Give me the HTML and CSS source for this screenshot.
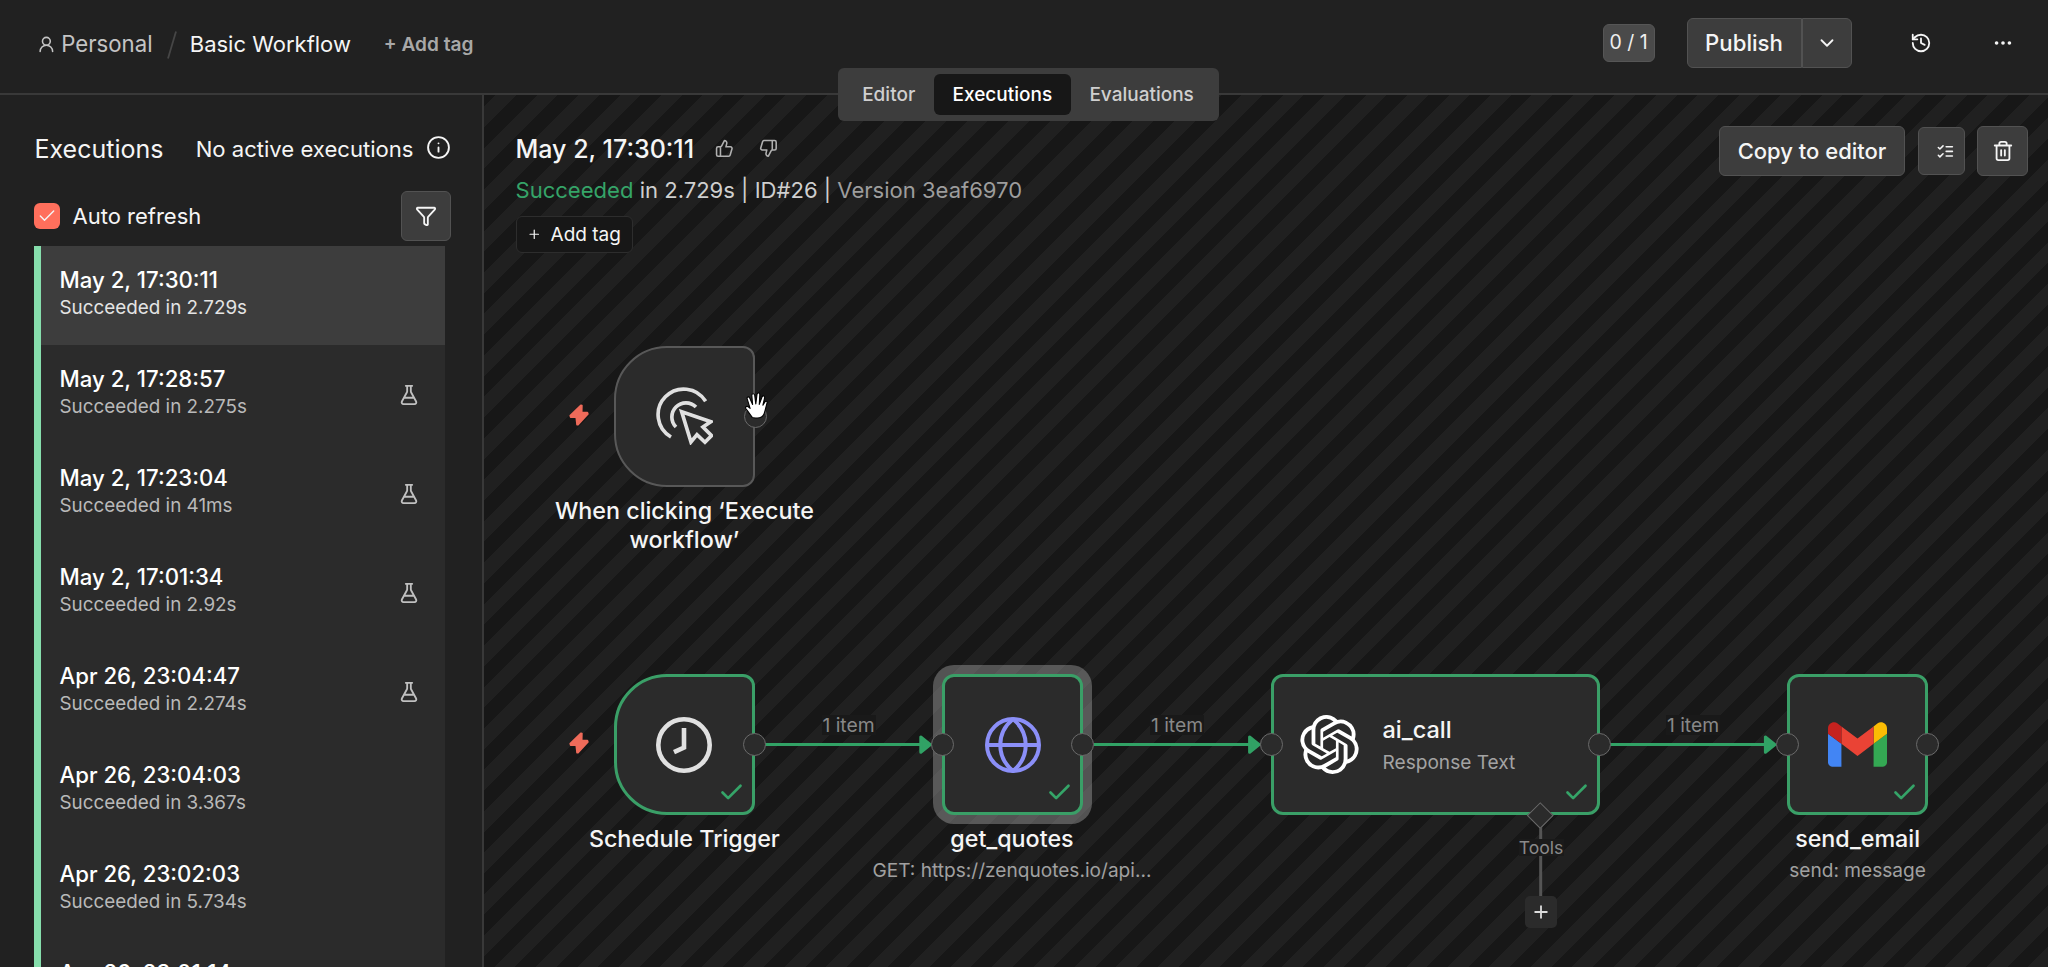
FILE: index.html
```html
<!DOCTYPE html>
<html lang="en">
<head>
<meta charset="utf-8">
<title>Basic Workflow</title>
<link rel="stylesheet" href="styles.css">
</head>
<body>
<svg class="defs" width="0" height="0" aria-hidden="true">
  <symbol id="i-flask" viewBox="0 0 24 24"><path d="M14 2v6a2 2 0 0 0 .245.96l5.51 10.08A2 2 0 0 1 18 22H6a2 2 0 0 1-1.755-2.96l5.51-10.08A2 2 0 0 0 10 8V2M6.453 15h11.094M8.5 2h7"/></symbol>
  <symbol id="i-check" viewBox="0 0 24 24"><path d="M20 6 9 17l-5-5"/></symbol>
  <symbol id="i-bolt" viewBox="0 0 20 22"><path d="M11.8 1.2 1.2 11.6 1.6 13.1H7.2L8 20.6 9 20.7 18.9 9.9 18.4 8.5H12.7L12.9 1.6Z"/></symbol>
</svg>
<div class="app">
  <header class="topbar">
    <nav class="crumbs">
      <svg class="icon user" viewBox="0 0 24 24"><circle cx="12" cy="8" r="5"/><path d="M20 21a8 8 0 0 0-16 0"/></svg>
      <span class="owner">Personal</span>
      <svg class="slash" viewBox="0 0 10 28"><path d="M9 .5 1 27.5"/></svg>
      <span class="name">Basic Workflow</span>
      <span class="addtag">+ Add tag</span>
    </nav>
    <div class="actions">
      <span class="counter">0 / 1</span>
      <div class="split">
        <button class="publish">Publish</button>
        <button class="more"><svg class="icon i22" viewBox="0 0 24 24"><path d="m6 9 6 6 6-6"/></svg></button>
      </div>
      <svg class="icon i22 history" viewBox="0 0 24 24"><path d="M3 12a9 9 0 1 0 9-9 9.75 9.75 0 0 0-6.74 2.74L3 8"/><path d="M3 3v5h5M12 7v5l4 2"/></svg>
      <svg class="icon i22" viewBox="0 0 24 24"><circle cx="12" cy="12" r="1"/><circle cx="19" cy="12" r="1"/><circle cx="5" cy="12" r="1"/></svg>
    </div>
    <div class="tabs">
      <span class="tab">Editor</span>
      <span class="tab active">Executions</span>
      <span class="tab">Evaluations</span>
    </div>
  </header>

  <aside class="sidebar">
    <div class="heading">
      <h1>Executions</h1>
      <span class="none">No active executions</span>
      <svg class="icon info" viewBox="0 0 24 24"><circle cx="12" cy="12" r="10"/><path d="M12 16v-4M12 8h.01"/></svg>
    </div>
    <div class="controls">
      <span class="checkbox"><svg class="icon" viewBox="0 0 24 24"><path d="M20 6 9 17l-5-5"/></svg></span>
      <span class="auto">Auto refresh</span>
      <button class="filter"><svg class="icon i22" viewBox="0 0 24 24"><path d="M10 20a1 1 0 0 0 .553.895l2 1A1 1 0 0 0 14 21v-7a2 2 0 0 1 .517-1.341L21.74 4.67A1 1 0 0 0 21 3H3a1 1 0 0 0-.742 1.67l7.225 7.989A2 2 0 0 1 10 14z"/></svg></button>
    </div>
    <ul class="list">
      <li class="run selected"><div><b>May 2, 17:30:11</b><span>Succeeded in 2.729s</span></div></li>
      <li class="run"><div><b>May 2, 17:28:57</b><span>Succeeded in 2.275s</span></div><svg class="icon i22"><use href="#i-flask"/></svg></li>
      <li class="run"><div><b>May 2, 17:23:04</b><span>Succeeded in 41ms</span></div><svg class="icon i22"><use href="#i-flask"/></svg></li>
      <li class="run"><div><b>May 2, 17:01:34</b><span>Succeeded in 2.92s</span></div><svg class="icon i22"><use href="#i-flask"/></svg></li>
      <li class="run"><div><b>Apr 26, 23:04:47</b><span>Succeeded in 2.274s</span></div><svg class="icon i22"><use href="#i-flask"/></svg></li>
      <li class="run"><div><b>Apr 26, 23:04:03</b><span>Succeeded in 3.367s</span></div></li>
      <li class="run"><div><b>Apr 26, 23:02:03</b><span>Succeeded in 5.734s</span></div></li>
      <li class="run"><div><b>Apr 26, 23:01:14</b></div></li>
    </ul>
  </aside>

  <main class="preview">
    <section class="details">
      <div class="summary">
        <div class="title">
          <h2>May 2, 17:30:11</h2>
          <svg class="icon thumb" viewBox="0 0 24 24"><path d="M7 10v12M15 5.88 14 10h5.83a2 2 0 0 1 1.92 2.56l-2.33 8A2 2 0 0 1 17.5 22H4a2 2 0 0 1-2-2v-8a2 2 0 0 1 2-2h2.76a2 2 0 0 0 1.79-1.11L12 2a3.13 3.13 0 0 1 3 3.88Z"/></svg>
          <svg class="icon thumb" viewBox="0 0 24 24"><path d="M17 14V2M9 18.12 10 14H4.17a2 2 0 0 1-1.92-2.56l2.33-8A2 2 0 0 1 6.5 2H20a2 2 0 0 1 2 2v8a2 2 0 0 1-2 2h-2.76a2 2 0 0 0-1.79 1.11L12 22a3.13 3.13 0 0 1-3-3.88Z"/></svg>
        </div>
        <p class="status"><span class="ok">Succeeded</span> in 2.729s | ID#26 | <span class="version">Version 3eaf6970</span></p>
        <button class="tagbtn"><svg class="icon" viewBox="0 0 24 24"><path d="M5 12h14M12 5v14"/></svg>Add tag</button>
      </div>
      <div class="tools">
        <button class="copy">Copy to editor</button>
        <button class="vote"><svg class="icon" viewBox="0 0 24 24"><path d="m3 17 2 2 4-4M3 7l2 2 4-4M13 6h8M13 12h8M13 18h8"/></svg></button>
        <button class="trash"><svg class="icon i22" viewBox="0 0 24 24"><path d="M3 6h18M19 6v14a2 2 0 0 1-2 2H7a2 2 0 0 1-2-2V6M8 6V4a2 2 0 0 1 2-2h4a2 2 0 0 1 2 2v2M10 11v6M14 11v6"/></svg></button>
      </div>
    </section>

    <div class="canvas">
      <svg class="edges" viewBox="484 95 1564 872">
        <g class="edge"><path d="M765 744.6H922"/><path d="M1094 744.6H1250"/><path d="M1610 744.6H1767"/></g>
        <g class="arrow"><path d="M920.8 737v15.2l9.6-7.6z"/><path d="M1249.6 737v15.2l9.6-7.6z"/><path d="M1765.4 737v15.2l9.6-7.6z"/></g>
        <path class="tool-edge" d="M1540.7 826V897"/>
      </svg>

      <span class="edge-label e1">1 item</span>
      <span class="edge-label e2">1 item</span>
      <span class="edge-label e3">1 item</span>

      <svg class="bolt b1"><use href="#i-bolt"/></svg>
      <div class="node trigger manual">
        <svg class="cursor" viewBox="348 204 172 172"><path d="M497 247A77 77 0 1 0 393 354M468 264A42 42 0 1 0 408 324M425 278 513 308 489 324 515 350 495 370 471 347 453 369Z"/></svg>
        <i class="port out"></i>
      </div>
      <div class="caption c1"><strong>When clicking ‘Execute workflow’</strong></div>
      <svg class="hand" viewBox="0 0 24 27"><path d="M8.3 25.4C6.6 23.2 3.4 18.7 1.8 16.5 .9 15.2 2.6 13.7 4.2 14.8L6.1 16.3 3.2 6.9C2.6 4.8 4.9 4.1 5.7 6L8.6 12.4 7.8 3.4C7.7 1.3 10.3 1.2 10.7 3.2L11.8 12 13 2.4C13.4 .4 15.9 .7 15.8 2.8L15.3 12.4 18 5C18.8 3.1 21 3.9 20.6 5.8L18.9 13.2 20.9 9.9C21.9 8.5 23.6 9.5 23 11.1 21.9 14.6 21.2 19 20 22 18.6 25.5 16 26 13.2 26 11 26 9.3 26.2 8.3 25.4Z"/></svg>

      <svg class="bolt b2"><use href="#i-bolt"/></svg>
      <div class="node trigger success schedule">
        <svg class="clock" viewBox="0 0 56 56"><circle cx="28" cy="28" r="25.7"/><path d="M28 11v19.5L18 35.2"/></svg>
        <i class="port out"></i>
        <svg class="tick"><use href="#i-check"/></svg>
      </div>
      <div class="caption c2"><strong>Schedule Trigger</strong></div>

      <div class="node success http">
        <svg class="globe" viewBox="0 0 56 56"><circle cx="28" cy="28" r="26"/><path d="M2 28h52M28 2C11 16 11 40 28 54C45 40 45 16 28 2"/></svg>
        <i class="port in"></i><i class="port out"></i>
        <svg class="tick"><use href="#i-check"/></svg>
      </div>
      <div class="caption c3"><strong>get_quotes</strong><small>GET: https://zenquotes.io/api...</small></div>

      <div class="node success ai">
        <svg class="openai" viewBox="0 0 24 24"><path d="M22.2819 9.8211a5.9847 5.9847 0 0 0-.5157-4.9108 6.0462 6.0462 0 0 0-6.5098-2.9A6.0651 6.0651 0 0 0 4.9807 4.1818a5.9847 5.9847 0 0 0-3.9977 2.9 6.0462 6.0462 0 0 0 .7427 7.0966 5.98 5.98 0 0 0 .511 4.9107 6.051 6.051 0 0 0 6.5146 2.9001A5.9847 5.9847 0 0 0 13.2599 24a6.0557 6.0557 0 0 0 5.7718-4.2058 5.9894 5.9894 0 0 0 3.9977-2.9001 6.0557 6.0557 0 0 0-.7475-7.073zm-9.022 12.6081a4.4755 4.4755 0 0 1-2.8764-1.0408l.1419-.0804 4.7783-2.7582a.7948.7948 0 0 0 .3927-.6813v-6.7369l2.02 1.1686a.071.071 0 0 1 .038.052v5.5826a4.504 4.504 0 0 1-4.4945 4.4944zm-9.6607-4.1254a4.4708 4.4708 0 0 1-.5346-3.0137l.142.0852 4.783 2.7582a.7712.7712 0 0 0 .7806 0l5.8428-3.3685v2.3324a.0804.0804 0 0 1-.0332.0615L9.74 19.9502a4.4992 4.4992 0 0 1-6.1408-1.6464zM2.3408 7.8956a4.485 4.485 0 0 1 2.3655-1.9728V11.6a.7664.7664 0 0 0 .3879.6765l5.8144 3.3543-2.0201 1.1685a.0757.0757 0 0 1-.071 0l-4.8303-2.7865A4.504 4.504 0 0 1 2.3408 7.872zm16.5963 3.8558L13.1038 8.364 15.1192 7.2a.0757.0757 0 0 1 .071 0l4.8303 2.7913a4.4944 4.4944 0 0 1-.6765 8.1042v-5.6772a.79.79 0 0 0-.407-.667zm2.0107-3.0231l-.142-.0852-4.7735-2.7818a.7759.7759 0 0 0-.7854 0L9.409 9.2297V6.8974a.0662.0662 0 0 1 .0284-.0615l4.8303-2.7866a4.4992 4.4992 0 0 1 6.6802 4.66zM8.3065 12.863l-2.02-1.1638a.0804.0804 0 0 1-.038-.0567V6.0742a4.4992 4.4992 0 0 1 7.3757-3.4537l-.142.0805L8.704 5.459a.7948.7948 0 0 0-.3927.6813zm1.0976-2.3654l2.602-1.4998 2.6069 1.4998v2.9994l-2.5974 1.4997-2.6067-1.4997Z"/></svg>
        <div class="ai-text"><strong>ai_call</strong><small>Response Text</small></div>
        <i class="port in"></i><i class="port out"></i><i class="port diamond"></i>
        <svg class="tick"><use href="#i-check"/></svg>
      </div>
      <span class="tools-label">Tools</span>
      <span class="plus"><svg viewBox="0 0 14 14"><path d="M7 .5v13M.5 7h13"/></svg></span>

      <div class="node success gmail">
        <svg class="gmail-logo" viewBox="52 42 88 66"><path fill="#4285f4" d="M58 108h14V74L52 59v43c0 3.32 2.69 6 6 6"/><path fill="#34a853" d="M120 108h14c3.32 0 6-2.69 6-6V59l-20 15"/><path fill="#fbbc04" d="M120 48v26l20-15v-8c0-7.42-8.47-11.65-14.4-7.2"/><path fill="#ea4335" d="M72 74V48l24 18 24-18v26L96 92"/><path fill="#c5221f" d="M52 51v8l20 15V48l-5.6-4.2c-5.94-4.45-14.4-.22-14.4 7.2"/></svg>
        <i class="port in"></i><i class="port out"></i>
        <svg class="tick"><use href="#i-check"/></svg>
      </div>
      <div class="caption c4"><strong>send_email</strong><small>send: message</small></div>
    </div>
  </main>
</div>
</body>
</html>
```
FILE: styles.css
```css
* { box-sizing: border-box; margin: 0; padding: 0; }

body {
  width: 2048px;
  height: 967px;
  overflow: hidden;
  background: #212121;
  color: #f5f5f5;
  font-family: Inter, "Liberation Sans", sans-serif;
  font-size: 22px;
}

button {
  display: flex;
  align-items: center;
  justify-content: center;
  font: inherit;
  font-weight: 500;
  color: inherit;
  background: #3d3d3d;
  border: 1.5px solid #525252;
  border-radius: 6px;
}

.defs { position: absolute; }

.icon {
  flex: none;
  display: block;
  width: 18.75px;
  height: 18.75px;
  fill: none;
  stroke: currentColor;
  stroke-width: 2;
  stroke-linecap: round;
  stroke-linejoin: round;
}
.i22 { width: 22px; height: 22px; }

.app {
  display: grid;
  grid-template: 95px 872px / 484px 1564px;
}

/* Top bar */
.topbar {
  grid-column: 1 / -1;
  position: relative;
  z-index: 2;
  display: flex;
  justify-content: space-between;
  border-bottom: 2px solid #393939;
}
.crumbs { display: flex; align-items: center; height: 88px; padding-left: 36.5px; white-space: nowrap; }
.user { color: #c4c4c4; margin-right: 6px; }
.owner { color: #c4c4c4; width: 106px; font-size: 22.2px; margin-top: -1px; }
.slash { width: 10px; height: 28px; fill: none; stroke: #464646; stroke-width: 1.8; margin: 2px 12.5px 0 0; }
.name { width: 194px; }
.addtag { color: #a8a8a8; font-size: 19.1px; font-weight: 600; }

.actions { display: flex; align-items: center; height: 85px; padding-right: 34.5px; }
.counter {
  width: 52px;
  height: 38px;
  margin-right: 32px;
  border: 1px solid #565656;
  border-radius: 6px;
  background: #4a4a4a;
  font-size: 19.5px;
  line-height: 35px;
  text-align: center;
  color: #eee;
}
.split { display: flex; width: 165px; height: 50px; margin-right: 58px; }
.publish { width: 115px; border-radius: 6px 0 0 6px; font-size: 22.2px; }
.more { flex: 1; border-left-width: 1px; border-radius: 0 6px 6px 0; }
.history { margin-right: 60px; }

.tabs {
  position: absolute;
  left: 837.5px;
  top: 68px;
  display: flex;
  height: 53px;
  width: 381px;
  padding: 6px;
  border-radius: 6px;
  background: #3d3d3d;
}
.tab {
  flex: 1 1 auto;
  border-radius: 6px;
  font-size: 19px;
  font-weight: 500;
  line-height: 41px;
  text-align: center;
  color: #cfcfcf;
}
.tab.active { background: #171717; color: #fff; }

/* Sidebar */
.sidebar {
  display: flex;
  flex-direction: column;
  padding: 34px 31px 0 34px;
  border-right: 2px solid #393939;
  overflow: hidden;
}
.heading { flex: none; display: flex; align-items: center; height: 40px; white-space: nowrap; }
.heading h1 { flex: 1; font-size: 25px; font-weight: 400; padding-left: .5px; }
.none { margin-right: 12.5px; font-size: 22.1px; }
.info { width: 25px; height: 25px; margin-top: -4px; stroke-width: 1.8; }
.controls { flex: none; display: flex; align-items: center; height: 50px; margin-top: 22px; }
.checkbox {
  display: grid;
  place-items: center;
  width: 26px;
  height: 26px;
  border-radius: 6px;
  background: #ff6f5c;
}
.checkbox .icon { width: 20px; height: 20px; stroke-width: 1.7; }
.auto { flex: 1; padding-left: 12.5px; }
.filter { width: 50px; height: 50px; }

.list { flex: none; list-style: none; width: 411px; margin-top: 5px; border-left: 7px solid #86deac; }
.run {
  display: flex;
  justify-content: space-between;
  align-items: center;
  height: 99.1px;
  padding: 0 25.5px 0 18.5px;
  background: #2b2b2b;
  color: #c0c0c0;
}
.run > div { align-self: flex-start; padding-top: 19.5px; }
.run b { display: block; font-size: 22.2px; font-weight: 500; line-height: 28px; color: #fff; }
.run span { display: block; font-size: 18.85px; line-height: 28px; color: #b9b9b9; }
.run.selected { background: #3d3d3d; }
.run.selected span { color: #e4e4e4; }

/* Preview */
.preview {
  position: relative;
  background: repeating-linear-gradient(135deg, #171717 0 8.27px, #202020 8.27px 22.93px, #171717 22.93px 29.31px);
}
.details { display: flex; justify-content: space-between; padding: 31px 20px 0 31.5px; }
.title { display: flex; align-items: center; height: 46px; }
.title h2 { width: 199px; font-size: 25px; font-weight: 500; white-space: nowrap; }
.thumb { margin: -2px 25.5px 0 0; color: #b0b0b0; }
.status { line-height: 36px; color: #cfcfcf; white-space: nowrap; font-size: 22.05px; }
.ok { color: #35a468; }
.version { color: #9d9d9d; }
.tagbtn {
  width: 117px;
  height: 37px;
  margin-top: 7.5px;
  gap: 9px;
  background: #171717;
  border-color: #2d2d2d;
  font-size: 19px;
  font-weight: 400;
}
.tagbtn .icon { width: 14.5px; height: 14.5px; }
.tools { display: flex; align-items: center; height: 50px; }
.copy { width: 186px; height: 50px; margin-right: 12.5px; }
.vote { width: 47.5px; height: 47.5px; margin-right: 12px; padding-left: 8px; }
.trash { width: 51px; height: 50px; }

/* Workflow canvas */
.canvas, .edges { position: absolute; inset: 0; }
.edges { width: 1564px; height: 872px; }
.edge { fill: none; stroke: #31a265; stroke-width: 3; }
.arrow { fill: #31a265; stroke: #31a265; stroke-width: 3; stroke-linejoin: round; }
.tool-edge { stroke: #555; stroke-width: 3; }

.edge-label {
  position: absolute;
  top: 620px;
  width: 54px;
  background: #191919;
  color: #888;
  font-size: 19.3px;
  line-height: 20px;
  text-align: center;
  white-space: nowrap;
}
.e1 { left: 337.5px; }
.e2 { left: 666px; }
.e3 { left: 1182px; }

.bolt {
  position: absolute;
  left: 84.5px;
  width: 20px;
  height: 22px;
  fill: #ef6b5a;
  stroke: #ef6b5a;
  stroke-width: 1.6;
  stroke-linejoin: round;
}
.b1 { top: 308.5px; }
.b2 { top: 637px; }

.node {
  position: absolute;
  display: flex;
  align-items: center;
  justify-content: center;
  width: 141px;
  height: 141px;
  border: 2px solid #585858;
  border-radius: 12px;
  background: #2b2b2b;
}
.trigger { border-radius: 53px 12px 12px 53px; }
.success { top: 579px; border: 3px solid #3a9f67; }
.manual { left: 130px; top: 250.5px; }
.schedule { left: 130px; }
.http { left: 458px; box-shadow: 0 0 0 9px rgba(255, 255, 255, .26); }
.ai { left: 787px; width: 328.5px; justify-content: flex-start; padding-left: 26px; }
.gmail { left: 1303px; }

.cursor { width: 57.3px; height: 57.3px; fill: none; stroke: #e0e0e0; stroke-width: 11; }
.clock { width: 56px; height: 56px; margin-right: 1px; fill: none; stroke: #e0e0e0; stroke-width: 4.6; }
.globe { width: 56px; height: 56px; fill: none; stroke: #8b8ff8; stroke-width: 4; }
.openai { width: 59px; height: 59px; fill: #fff; }
.gmail-logo { width: 59px; height: 45px; }
.ai-text { display: flex; flex-direction: column; padding-left: 23.5px; padding-top: 2px; }
.ai-text strong { font-size: 23.5px; font-weight: 500; line-height: 32px; }
.ai-text small { font-size: 19.1px; line-height: 32px; color: #a3a3a3; }

.tick {
  position: absolute;
  right: 7px;
  bottom: 6px;
  width: 27px;
  height: 27px;
  fill: none;
  stroke: #35a468;
  stroke-width: 2.4;
  stroke-linecap: round;
  stroke-linejoin: round;
}

.port {
  position: absolute;
  top: 50%;
  width: 23px;
  height: 23px;
  margin: -11.5px;
  border: 1.5px solid #6a6a6a;
  border-radius: 50%;
  background: #2b2b2b;
}
.in { left: -2.5px; }
.out { right: -2.5px; }
.diamond {
  left: 266.5px;
  top: 138px;
  width: 18.5px;
  height: 18.5px;
  margin: -9.25px;
  border-radius: 0;
  transform: rotate(45deg);
}

.caption {
  position: absolute;
  display: flex;
  flex-direction: column;
  width: 380px;
  text-align: center;
  white-space: nowrap;
}
.caption strong { font-size: 23.3px; font-weight: 500; line-height: 29.2px; }
.caption small { margin-top: 3px; font-size: 19.1px; line-height: 29px; color: #a0a0a0; }
.c1 { left: 60.4px; top: 400.5px; width: 280px; white-space: normal; }
.c2 { left: 10.4px; top: 728.5px; }
.c3 { left: 338px; top: 728.5px; }
.c4 { left: 1183.6px; top: 728.5px; }

.hand {
  position: absolute;
  left: 259.5px;
  top: 296.5px;
  width: 24px;
  height: 27px;
  fill: #fff;
  stroke: #000;
  stroke-width: 1.1;
  stroke-linejoin: round;
  overflow: visible;
}

.tools-label {
  position: absolute;
  left: 1034.5px;
  top: 743.5px;
  width: 45px;
  background: #1a1a1a;
  color: #8a8a8a;
  font-size: 17.6px;
  line-height: 17.5px;
  text-align: center;
}
.plus {
  position: absolute;
  display: grid;
  place-items: center;
  left: 1040.7px;
  top: 801px;
  width: 32px;
  height: 32px;
  border-radius: 5px;
  background: #2b2b2b;
}
.plus svg { width: 14px; height: 14px; stroke: #ddd; stroke-width: 1.8; }
```
